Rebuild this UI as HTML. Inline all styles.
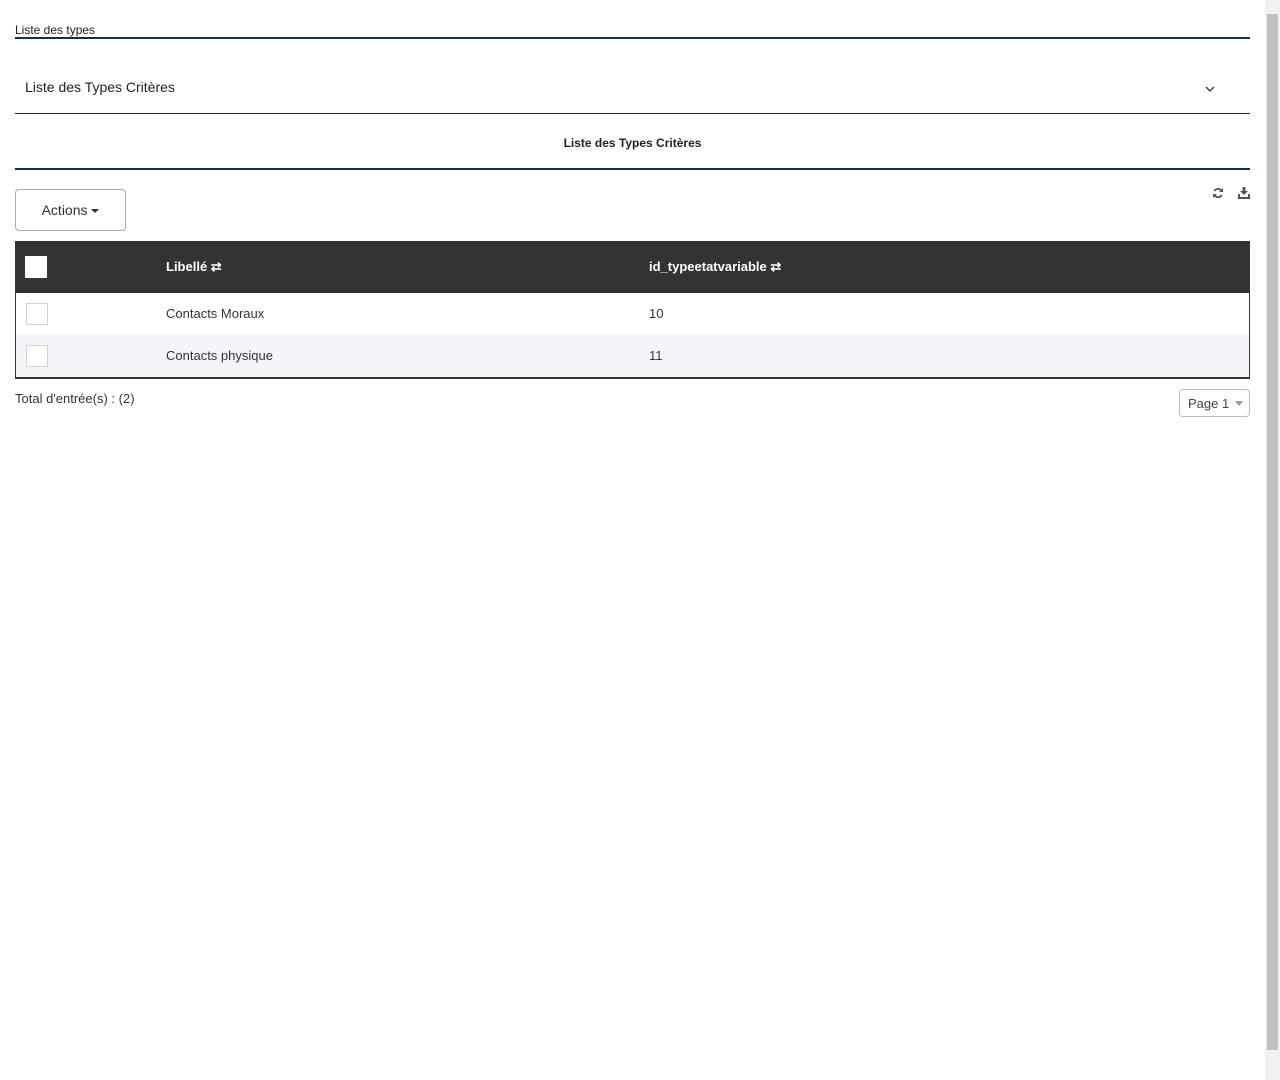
<!DOCTYPE html>
<html><head><meta charset="utf-8"><style>
body{margin:0;width:1280px;height:1080px;background:#fff;font-family:"Liberation Sans",sans-serif;color:#333;position:relative;overflow:hidden}
.sb{position:absolute;right:0;top:0;width:15px;height:1080px;background:#f1f1f1}
.sb div{position:absolute;left:2px;top:14px;width:11px;height:1036px;background:#c1c1c1}
.a{position:absolute}
</style></head><body>
<div class="sb"><div></div></div>
<div class="a" style="left:15px;top:23px;font-size:12px;color:#222">Liste des types</div>
<div class="a" style="left:15px;top:37px;width:1235px;height:2px;background:#13304f"></div>
<div class="a" style="left:25px;top:79px;font-size:14px;color:#222">Liste des Types Critères</div>
<svg class="a" style="left:1205px;top:85px" width="10" height="8"><path d="M1 2 L5 6 L9 2" fill="none" stroke="#333" stroke-width="1.3"/></svg>
<div class="a" style="left:15px;top:113px;width:1235px;height:1px;background:#13304f"></div>
<div class="a" style="left:15px;top:136px;width:1235px;text-align:center;font-size:12px;font-weight:bold;color:#222">Liste des Types Critères</div>
<div class="a" style="left:15px;top:168px;width:1235px;height:2px;background:#13304f"></div>
<div class="a" style="left:15px;top:189px;width:109px;height:40px;border:1px solid #aaa;border-radius:4px;font-size:14px;line-height:40px;text-align:center;color:#333">Actions <span style="display:inline-block;border-left:4px solid transparent;border-right:4px solid transparent;border-top:4px solid #333;vertical-align:middle"></span></div>
<svg class="a" style="left:1212px;top:187px" width="12" height="12" viewBox="0 0 12 12"><path d="M10 4.5A4.3 4.3 0 0 0 2.3 4M2 7.5A4.3 4.3 0 0 0 9.7 8" fill="none" stroke="#555" stroke-width="1.8"/><path d="M11 1v4H7zM1 11V7h4z" fill="#555"/></svg>
<svg class="a" style="left:1238px;top:187px" width="12" height="12" viewBox="0 0 12 12"><path d="M4.5 0h3v4h2.5L6 8 2 4h2.5z" fill="#555"/><path d="M0 7h2v3h8V7h2v5H0z" fill="#555"/></svg>
<div class="a" style="left:15px;top:241px;width:1235px;height:52px;background:#333"></div>
<div class="a" style="left:25px;top:256px;width:22px;height:22px;background:#fff"></div>
<div class="a" style="left:166px;top:259px;font-size:13px;font-weight:bold;color:#fff">Libellé ⇄</div>
<div class="a" style="left:649px;top:259px;font-size:13px;font-weight:bold;color:#fff">id_typeetatvariable ⇄</div>
<div class="a" style="left:15px;top:293px;width:1233px;height:84px;border:1px solid #333;border-top:0;border-bottom:2px solid #333"></div>
<div class="a" style="left:16px;top:335px;width:1233px;height:42px;background:#f4f5f9"></div>
<div class="a" style="left:26px;top:303px;width:20px;height:20px;border:1px solid #d5d0c8;background:#fff"></div>
<div class="a" style="left:26px;top:345px;width:20px;height:20px;border:1px solid #d5d0c8;background:#fff"></div>
<div class="a" style="left:166px;top:306px;font-size:13px">Contacts Moraux</div>
<div class="a" style="left:166px;top:348px;font-size:13px">Contacts physique</div>
<div class="a" style="left:649px;top:306px;font-size:13px">10</div>
<div class="a" style="left:649px;top:348px;font-size:13px">11</div>
<div class="a" style="left:15px;top:391px;font-size:13px">Total d'entrée(s) : (2)</div>
<div class="a" style="left:1179px;top:389px;width:69px;height:26px;border:1px solid #bbb;border-radius:4px;font-size:13px;line-height:27px;color:#444"><span style="margin-left:8px">Page 1</span><span style="position:absolute;left:55px;top:11px;border-left:4px solid transparent;border-right:4px solid transparent;border-top:5px solid #999"></span></div>
</body></html>
